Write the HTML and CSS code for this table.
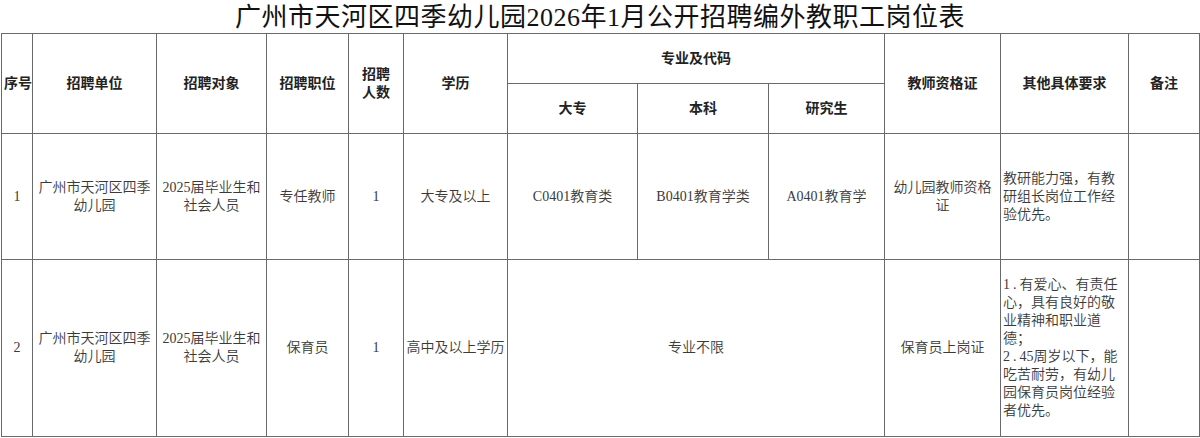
FILE: index.html
```html
<!DOCTYPE html>
<html lang="zh-CN">
<head>
<meta charset="utf-8">
<title>岗位表</title>
<link rel="stylesheet" href="styles.css">
</head>
<body>
<h1 class="title">广州市天河区四季幼儿园2026年1月公开招聘编外教职工岗位表</h1>
<table class="jobs">
  <colgroup>
    <col class="c-no"><col class="c-unit"><col class="c-target"><col class="c-pos"><col class="c-num">
    <col class="c-edu"><col class="c-dz"><col class="c-bk"><col class="c-yjs"><col class="c-cert">
    <col class="c-other"><col class="c-note">
  </colgroup>
  <thead>
    <tr class="h1">
      <th rowspan="2">序号</th>
      <th rowspan="2">招聘单位</th>
      <th rowspan="2">招聘对象</th>
      <th rowspan="2">招聘职位</th>
      <th rowspan="2">招聘<br>人数</th>
      <th rowspan="2">学历</th>
      <th colspan="3">专业及代码</th>
      <th rowspan="2">教师资格证</th>
      <th rowspan="2">其他具体要求</th>
      <th rowspan="2">备注</th>
    </tr>
    <tr class="h2">
      <th>大专</th>
      <th>本科</th>
      <th>研究生</th>
    </tr>
  </thead>
  <tbody>
    <tr class="r1">
      <td>1</td>
      <td>广州市天河区四季<br>幼儿园</td>
      <td>2025届毕业生和<br>社会人员</td>
      <td>专任教师</td>
      <td>1</td>
      <td>大专及以上</td>
      <td>C0401教育类</td>
      <td>B0401教育学类</td>
      <td>A0401教育学</td>
      <td>幼儿园教师资格<br>证</td>
      <td class="left">教研能力强，有教<br>研组长岗位工作经<br>验优先。</td>
      <td></td>
    </tr>
    <tr class="r2">
      <td>2</td>
      <td>广州市天河区四季<br>幼儿园</td>
      <td>2025届毕业生和<br>社会人员</td>
      <td>保育员</td>
      <td>1</td>
      <td>高中及以上学历</td>
      <td colspan="3">专业不限</td>
      <td>保育员上岗证</td>
      <td class="left"><span class="num">1.</span>有爱心、有责任<br>心，具有良好的敬<br>业精神和职业道<br>德；<br><span class="num">2.</span>45周岁以下，能<br>吃苦耐劳，有幼儿<br>园保育员岗位经验<br>者优先。</td>
      <td></td>
    </tr>
  </tbody>
</table>
</body>
</html>
```
FILE: styles.css
```css
html, body {
  margin: 0;
  padding: 0;
  background: #fff;
}

body {
  width: 1200px;
  font-family: "Liberation Serif", "Noto Sans CJK SC", serif;
  color: #3a3a3a;
}

.title {
  margin: 0;
  height: 33px;
  line-height: 36px;
  font-size: 26px;
  font-weight: normal;
  text-align: center;
  color: #111;
  letter-spacing: 0.5px;
}

.jobs {
  margin-left: 1px;
  width: 1198px;
  table-layout: fixed;
  border-collapse: collapse;
  font-size: 14px;
  line-height: 18px;
}

.jobs th,
.jobs td {
  border: 1px solid #6a6a6a;
  padding: 0 2px;
  text-align: center;
  vertical-align: middle;
  white-space: nowrap;
  overflow: hidden;
}

.jobs th {
  font-weight: bold;
  color: #222;
}

.jobs td {
  font-weight: 350;
}

.jobs td.left {
  text-align: left;
}

.num {
  letter-spacing: 3px;
}

.c-no { width: 31px; }
.c-unit { width: 124px; }
.c-target { width: 110px; }
.c-pos { width: 82px; }
.c-num { width: 55px; }
.c-edu { width: 104px; }
.c-dz { width: 130px; }
.c-bk { width: 131px; }
.c-yjs { width: 116px; }
.c-cert { width: 116px; }
.c-other { width: 128px; }
.c-note { width: 71px; }

.h1 { height: 50px; }
.h2 { height: 50px; }
.r1 { height: 126px; }
.r2 { height: 177px; }
```
